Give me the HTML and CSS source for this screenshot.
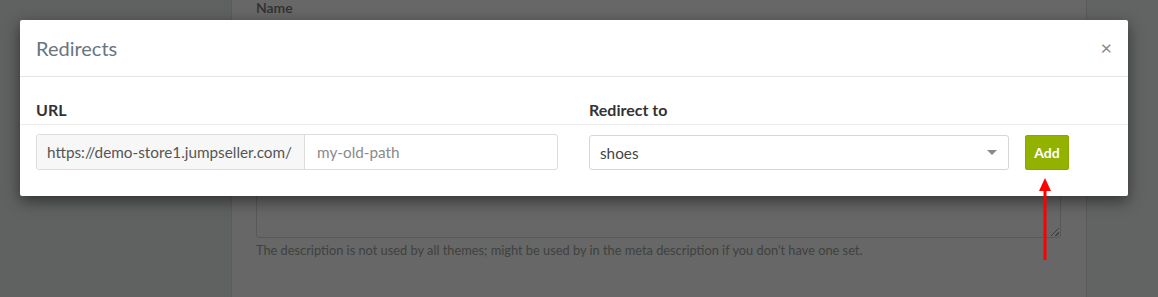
FILE: index.html
```html
<!DOCTYPE html>
<html>
<head>
<meta charset="utf-8">
<link rel="stylesheet" href="styles.css">
</head>
<body>
<div class="page">
  <div class="side"></div>
  <div class="panel">
    <div class="field-label">Name</div>
    <div class="spacer"></div>
    <div class="textarea"><span class="grip"></span></div>
    <p class="help">The description is not used by all themes; might be used by in the meta description if you don't have one set.</p>
  </div>
  <div class="side"></div>
</div>

<div class="modal">
  <div class="modal-header">
    <h4 class="modal-title">Redirects</h4>
    <span class="close">&times;</span>
  </div>
  <div class="modal-body">
    <div class="row head">
      <div class="col-url"><label>URL</label></div>
      <div class="col-to"><label>Redirect to</label></div>
    </div>
    <div class="row fields">
      <div class="col-url">
        <div class="input-group">
          <span class="addon">https://demo-store1.jumpseller.com/</span>
          <span class="input placeholder">my-old-path</span>
        </div>
      </div>
      <div class="col-to">
        <div class="select"><span>shoes</span><span class="caret"></span></div>
      </div>
      <div class="col-btn"><button class="btn-add">Add</button></div>
    </div>
  </div>
</div>

<div class="arrow">
  <svg width="14" height="82" viewBox="0 0 14 82">
    <polygon points="7,0 13,13 1,13" fill="#ff0000"/>
    <rect x="5.5" y="10" width="3" height="72" fill="#ff0000"/>
  </svg>
</div>
</body>
</html>
```
FILE: styles.css
```css
* { box-sizing: border-box; }
html, body { margin: 0; padding: 0; }
body {
  width: 1158px;
  height: 297px;
  overflow: hidden;
  font-family: Lato, "Liberation Sans", sans-serif;
  background: #606161;
  position: relative;
}
.page {
  display: flex;
  height: 297px;
}
.side { width: 231px; background: #606161; }
.side:last-child { flex: 1; background: #626463; }
.panel {
  width: 856px;
  background: #666766;
  border-left: 1px solid #5b5b5b;
  border-right: 1px solid #5b5b5b;
  padding: 0 24px;
  display: flex;
  flex-direction: column;
}
.field-label {
  font-size: 14px;
  color: #2f3030;
  font-weight: 600;
  line-height: 16px;
  margin-top: 0;
}
.spacer { height: 135px; }
.textarea {
  height: 87px;
  border: 1px solid #575858;
  border-radius: 3px;
  margin-right: 1px;
  position: relative;
}
.grip {
  position: absolute;
  right: 1px;
  bottom: 1px;
  width: 8px;
  height: 8px;
  background: linear-gradient(135deg, transparent 45%, #3e3e3e 45%, #3e3e3e 55%, transparent 55%, transparent 75%, #3e3e3e 75%, #3e3e3e 85%, transparent 85%);
}
.help {
  margin: 5px 0 0;
  font-size: 12.8px;
  color: #404141;
  line-height: 15px;
}

.modal {
  position: absolute;
  left: 20px;
  top: 20px;
  width: 1108px;
  height: 176px;
  background: #fff;
  border-radius: 2px;
  box-shadow: 0 5px 15px rgba(0,0,0,0.5);
}
.modal-header {
  height: 57px;
  border-bottom: 1px solid #e5e5e5;
  padding: 0 16px;
  display: flex;
  align-items: center;
  justify-content: space-between;
}
.modal-title {
  margin: 0;
  font-size: 20px;
  font-weight: 400;
  color: #69757f;
}
.close {
  font-size: 20px;
  color: #888;
  line-height: 1;
  margin-right: 0;
  margin-top: -2px;
}
.row {
  display: flex;
  padding: 0 16px;
}
.row.head {
  height: 48px;
  align-items: flex-end;
  padding-bottom: 5px;
  border-bottom: 1px solid #ececec;
}
.row.head label {
  font-size: 16px;
  font-weight: 700;
  color: #333;
}
.col-url { width: 522px; margin-right: 31px; }
.col-to { width: 420px; margin-right: 16px; }
.col-btn { width: 44px; }
.row.fields {
  padding-top: 9px;
}
.input-group {
  display: flex;
  height: 36px;
  border: 1px solid #dcdcdc;
  border-radius: 3px;
  font-size: 15.3px;
}
.addon {
  background: #f7f7f7;
  color: #555;
  padding: 0 11px 0 10px;
  width: 268px;
  display: flex;
  align-items: center;
  border-right: 1px solid #dcdcdc;
  white-space: nowrap;
  border-radius: 3px 0 0 3px;
}
.input {
  flex: 1;
  display: flex;
  align-items: center;
  padding: 0 12px;
}
.placeholder { color: #8a8a8a; }
.select {
  margin-top: 1px;
  height: 35px;
  border: 1px solid #d6d6d6;
  border-radius: 3px;
  display: flex;
  align-items: center;
  justify-content: space-between;
  padding: 0 8px 0 10px;
  font-size: 15.3px;
  color: #444;
}
.caret {
  width: 0;
  height: 0;
  border-left: 5px solid transparent;
  border-right: 5px solid transparent;
  border-top: 5px solid #8a8a8a;
  margin-right: 3px;
}
.btn-add {
  margin-top: 1px;
  width: 44px;
  height: 35px;
  background: #93b200;
  border: 1px solid #8aa600;
  border-radius: 2px;
  color: #fff;
  font-family: Lato, "Liberation Sans", sans-serif;
  font-weight: 700;
  font-size: 14px;
  padding: 0;
}
.arrow {
  position: absolute;
  left: 1038px;
  top: 178px;
  width: 14px;
  height: 82px;
}
.arrow svg { display: block; }
```
